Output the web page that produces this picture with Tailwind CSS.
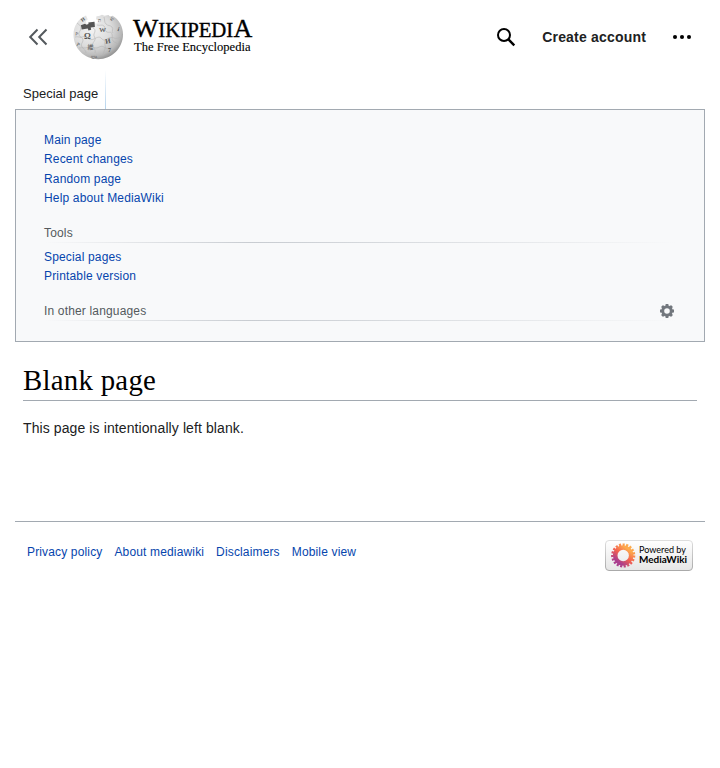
<!DOCTYPE html>
<html lang="en">
<head>
<meta charset="utf-8">
<title>Blank page - Wikipedia</title>
<script src="https://cdn.jsdelivr.net/npm/@tailwindcss/browser@4"></script>
</head>
<body class="min-h-screen bg-white px-[15px] font-['Liberation_Sans',Arial,sans-serif] text-[#202122]">
<header class="flex h-[73px] items-center pr-[13px] pl-[13px]">
  <button aria-label="Toggle sidebar" class="mr-[24px] flex">
    <svg class="h-5 w-5" viewBox="0 0 20 20" fill="none" stroke="#54595d" stroke-width="2"><path d="M9.500 2.500 2.200 10l7.300 7.500M18.500 2.500 11.200 10l7.300 7.500"/></svg>
  </button>
  <a href="#" class="flex items-center">
    <svg class="h-[73px] w-[54px]" viewBox="72 0 54 73">
      <defs>
        <radialGradient id="ball" cx=".36" cy=".32" r=".72"><stop offset="0" stop-color="#f4f4f4"/><stop offset=".55" stop-color="#dcdcdc"/><stop offset=".85" stop-color="#b8b8b8"/><stop offset="1" stop-color="#909090"/></radialGradient>
      </defs>
      <path fill="url(#ball)" d="M86 15.500c-8 3.500-12.500 10.500-12.500 19 0 14 11 24.700 24.700 24.700S123 48 123 34.500c0-8-4-15-10.500-18.700l-2.500.6-1.500-1.400-4 .8-2.500-1-3 1.300-2.500.2-.5 3 2.200 1.300-.8 3-2.400-.4-1.200-1.600-2 1.500-5.300 1-.8-3 2-1.500-.8-2.200z"/>
      <path fill="#555" d="M80.800 25.300l4.200-1.500 1.500 1 2-.8-.2-1.500 6.200-.8.400 5.300-4.200.6.500 2.200-2.700.8-.8-2-6 1z"/>
      <g fill="none" stroke="#b4b4b4" stroke-width=".6">
        <path d="M77 23c2 2 4 2 4 5s-3 4-2 7 4 2 4 5-3 4-1 7 4 3 4 6M93 28c3 1 2 4 1 6s2 4 1 6-3 3-2 6 3 4 2 7M97 25c3 1 5-1 7 1s0 5 3 6 4-1 5 2-1 5 1 7 4 1 5 4M75 37c3-1 5 1 7 0s5-1 6 1 4 2 6 1 5-3 7-1 3 3 6 1 5-2 7-1 5 0 8-1M79 48c4-1 6 1 9-1s5 1 8 1 5-3 8-1 5 2 8 0M104 17c1 3 0 5 2 7s4 1 6 3-1 4 1 6M105 40c-1 4 1 6 0 9s-2 4-2 7"/>
      </g>
      <g fill="#555" font-family="Liberation Serif, serif" font-weight="bold" text-anchor="middle">
        <text x="87.300" y="38.700" font-size="8.500">Ω</text>
        <text x="102.500" y="32" font-size="7" font-weight="normal" stroke="#555" stroke-width=".2">W</text>
        <text x="108" y="43.500" font-size="7" transform="rotate(-8 108 42)">И</text>
        <text x="90.500" y="49.300" font-size="6" font-weight="normal" font-family="Noto Sans CJK JP, sans-serif">維</text>
        <text x="76.500" y="35.500" font-size="5" font-weight="normal" transform="rotate(10 76 35)">P</text>
        <text x="82.500" y="21.500" font-size="5" transform="rotate(-35 82 19)">И</text>
        <text x="99.500" y="21.500" font-size="5" font-weight="normal">ת</text>
        <text x="112" y="20.500" font-size="5" transform="rotate(30 112 19)">ש</text>
        <text x="118.500" y="31" font-size="6" transform="rotate(15 118 29)">i</text>
        <text x="109.500" y="52" font-size="6">7</text>
        <text x="78.500" y="46" font-size="5" font-weight="normal" transform="rotate(25 78 44)">Р</text>
        <text x="94" y="58" font-size="4" font-weight="normal">ლა</text>
      </g>
    </svg>
    <svg class="ml-[4px] h-[73px] w-[128px]" viewBox="130 0 128 73" fill="#000" stroke="#000" font-family="Liberation Serif, serif">
      <g stroke-width=".35">
        <text x="133" y="36.500" font-size="26" textLength="25.300" lengthAdjust="spacingAndGlyphs">W</text>
        <text x="158.300" y="36.500" font-size="20" textLength="75" lengthAdjust="spacingAndGlyphs">IKIPEDI</text>
        <text x="233.500" y="36.500" font-size="26" textLength="18.800" lengthAdjust="spacingAndGlyphs">A</text>
      </g>
      <text x="134" y="51" stroke-width=".12" font-size="12.700" textLength="116.500" lengthAdjust="spacingAndGlyphs">The Free Encyclopedia</text>
    </svg>
  </a>
  <nav class="ml-auto flex items-center">
    <a href="#" aria-label="Search"><svg class="h-5 w-5" viewBox="0 0 20 20" fill="none" stroke="#000"><circle cx="8" cy="8" r="6" stroke-width="2"/><path d="m12.200 12.200 6.100 6.100" stroke-width="2.400"/></svg></a>
    <a href="#" class="mr-[26px] ml-[26px] text-sm font-bold tracking-[0.19px] whitespace-nowrap">Create account</a>
    <button aria-label="More"><svg class="block h-5 w-5" viewBox="0 0 20 20"><circle cx="3" cy="10" r="2.050"/><circle cx="10" cy="10" r="2.050"/><circle cx="17" cy="10" r="2.050"/></svg></button>
  </nav>
</header>

<div class="flex h-9">
  <a href="#" class="pt-[11px] pr-[7px] pl-2 text-[13px] leading-5">Special page</a>
  <span class="-mt-[3px] w-px bg-linear-to-b from-white to-[#b5d3ec]"></span>
</div>

<aside class="h-[233px] border border-[#a2a9b1] bg-[#f8f9fa] pt-[21px] pr-[28px] pl-[28px] text-xs tracking-[0.16px]">
  <ul class="leading-[19.4px] text-[#0645ad]">
    <li><a href="#">Main page</a></li>
    <li><a href="#">Recent changes</a></li>
    <li><a href="#">Random page</a></li>
    <li><a href="#">Help about MediaWiki</a></li>
  </ul>
  <h3 class="mt-[14px] h-[19px] leading-[20px] text-[#54595d]">Tools</h3>
  <div class="h-px bg-linear-to-r from-[#c8ccd1]/0 via-[#c8ccd1] via-33% to-[#c8ccd1]/0"></div>
  <ul class="pt-[5px] leading-[19.4px] text-[#0645ad]">
    <li><a href="#">Special pages</a></li>
    <li><a href="#">Printable version</a></li>
  </ul>
  <div class="mt-[15px] flex h-[19px] items-start justify-between leading-[20px] text-[#54595d]">
    <h3>In other languages</h3>
    <svg class="mt-[3px] mr-[2px] h-[14px] w-[14px]" viewBox="0 0 14 14" fill="none" stroke="#72777d"><circle cx="7" cy="7" r="4.300" stroke-width="3"/><g stroke-width="2.800"><path d="M7 0v2M7 12v2M0 7h2M12 7h2M2.050 2.050l1.400 1.400M10.550 10.550l1.400 1.400M2.050 11.950l1.400-1.400M10.550 3.450l1.400-1.400"/></g></svg>
  </div>
  <div class="h-px bg-linear-to-r from-[#c8ccd1]/0 via-[#c8ccd1] via-33% to-[#c8ccd1]/0"></div>
</aside>

<main class="h-[179px] px-2 pt-[20px]">
  <h1 class="h-[39px] border-b border-[#a2a9b1] font-['Liberation_Serif',serif] text-[28.8px] leading-[37px] tracking-[0.28px] text-black">Blank page</h1>
  <p class="mt-[16px] text-sm leading-[22px] tracking-[0.1px]">This page is intentionally left blank.</p>
</main>

<footer class="flex justify-between border-t border-[#a2a9b1] px-3 pt-[18px]">
  <ul class="flex gap-3 pt-[2px] text-xs leading-5 tracking-[0.15px] text-[#0645ad]">
    <li><a href="#">Privacy policy</a></li>
    <li><a href="#">About mediawiki</a></li>
    <li><a href="#">Disclaimers</a></li>
    <li><a href="#">Mobile view</a></li>
  </ul>
  <a href="#">
    <svg class="block h-[31px] w-[88px]" viewBox="0 0 88 31">
      <defs>
        <linearGradient id="plate" x1="0" y1="0" x2="0" y2="1"><stop offset="0" stop-color="#fff"/><stop offset="1" stop-color="#e6e6e6"/></linearGradient>
        <linearGradient id="edge" x1="0" y1="0" x2="0" y2="1"><stop offset="0" stop-color="#dedede"/><stop offset="1" stop-color="#aaa"/></linearGradient>
        <linearGradient id="petal" x1=".8" y1=".1" x2=".2" y2=".9"><stop offset="0" stop-color="#fdab4c"/><stop offset=".5" stop-color="#f4614f"/><stop offset="1" stop-color="#a83d90"/></linearGradient>
      </defs>
      <rect x=".5" y=".5" width="87" height="30" rx="3.500" fill="url(#plate)" stroke="url(#edge)"/>
      <circle cx="18.200" cy="15.500" r="8" fill="none" stroke="url(#petal)" stroke-width="4.600"/>
      <circle cx="18.200" cy="15.500" r="10.800" fill="none" stroke="url(#petal)" stroke-width="2.600" stroke-dasharray="2.100 1.470"/>
      <g fill="#000">
        <text x="34" y="13.100" font-family="Lato, sans-serif" font-size="9" textLength="47" lengthAdjust="spacingAndGlyphs">Powered by</text>
        <text x="34" y="23" font-family="Lato, sans-serif" font-weight="bold" font-size="9" textLength="48" lengthAdjust="spacingAndGlyphs">MediaWiki</text>
      </g>
    </svg>
  </a>
</footer>
</body>
</html>
